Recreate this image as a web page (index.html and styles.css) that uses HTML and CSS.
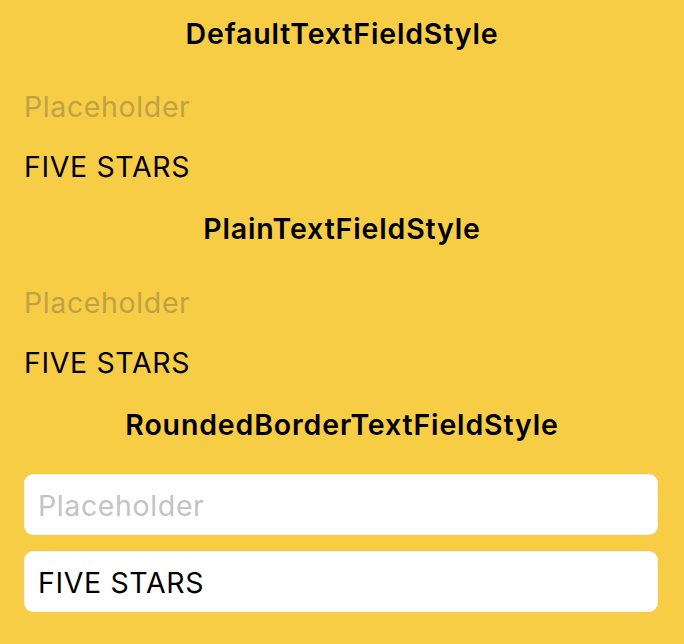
FILE: index.html
```html
<!DOCTYPE html>
<html lang="en">
<head>
<meta charset="utf-8">
<title>TextField Styles</title>
<link rel="stylesheet" href="styles.css">
</head>
<body>
<main class="page">
  <section class="group">
    <h2 class="title">DefaultTextFieldStyle</h2>
    <div class="field plain placeholder">Placeholder</div>
    <div class="field plain">FIVE STARS</div>
  </section>
  <section class="group">
    <h2 class="title">PlainTextFieldStyle</h2>
    <div class="field plain placeholder">Placeholder</div>
    <div class="field plain">FIVE STARS</div>
  </section>
  <section class="group rounded-group">
    <h2 class="title">RoundedBorderTextFieldStyle</h2>
    <div class="field rounded placeholder">Placeholder</div>
    <div class="field rounded">FIVE STARS</div>
  </section>
</main>
</body>
</html>
```
FILE: styles.css
```css
html, body {
  margin: 0;
  padding: 0;
  background: #f7cd46;
}
body {
  width: 684px;
  height: 644px;
  overflow: hidden;
  font-family: Inter, "Noto Sans", sans-serif;
  font-size: 28.5px;
  color: #000;
}
.page {
  display: flex;
  flex-direction: column;
  padding: 16.5px 26px 0 24px;
}
.group {
  display: flex;
  flex-direction: column;
  margin-bottom: 15.3px;
}
.title {
  margin: 0 -26px 26.4px -24px;
  font-size: 28.5px;
  font-weight: 600;
  line-height: 34px;
  letter-spacing: 0.85px;
  text-align: center;
}
.field {
  height: 60px;
  line-height: 60px;
  letter-spacing: 0.62px;
  white-space: nowrap;
}
.placeholder.plain {
  color: #bfa245;
}
.rounded-group .title {
  margin-bottom: 32px;
}
.rounded {
  box-sizing: border-box;
  height: 61px;
  line-height: 60px;
  padding: 1px 0 0 13px;
  background: #fff;
  border-radius: 9px;
  border: 1px solid rgba(0, 0, 0, 0.05);
}
.rounded + .rounded {
  margin-top: 16.5px;
}
.placeholder.rounded {
  color: #c4c4c7;
}
```
